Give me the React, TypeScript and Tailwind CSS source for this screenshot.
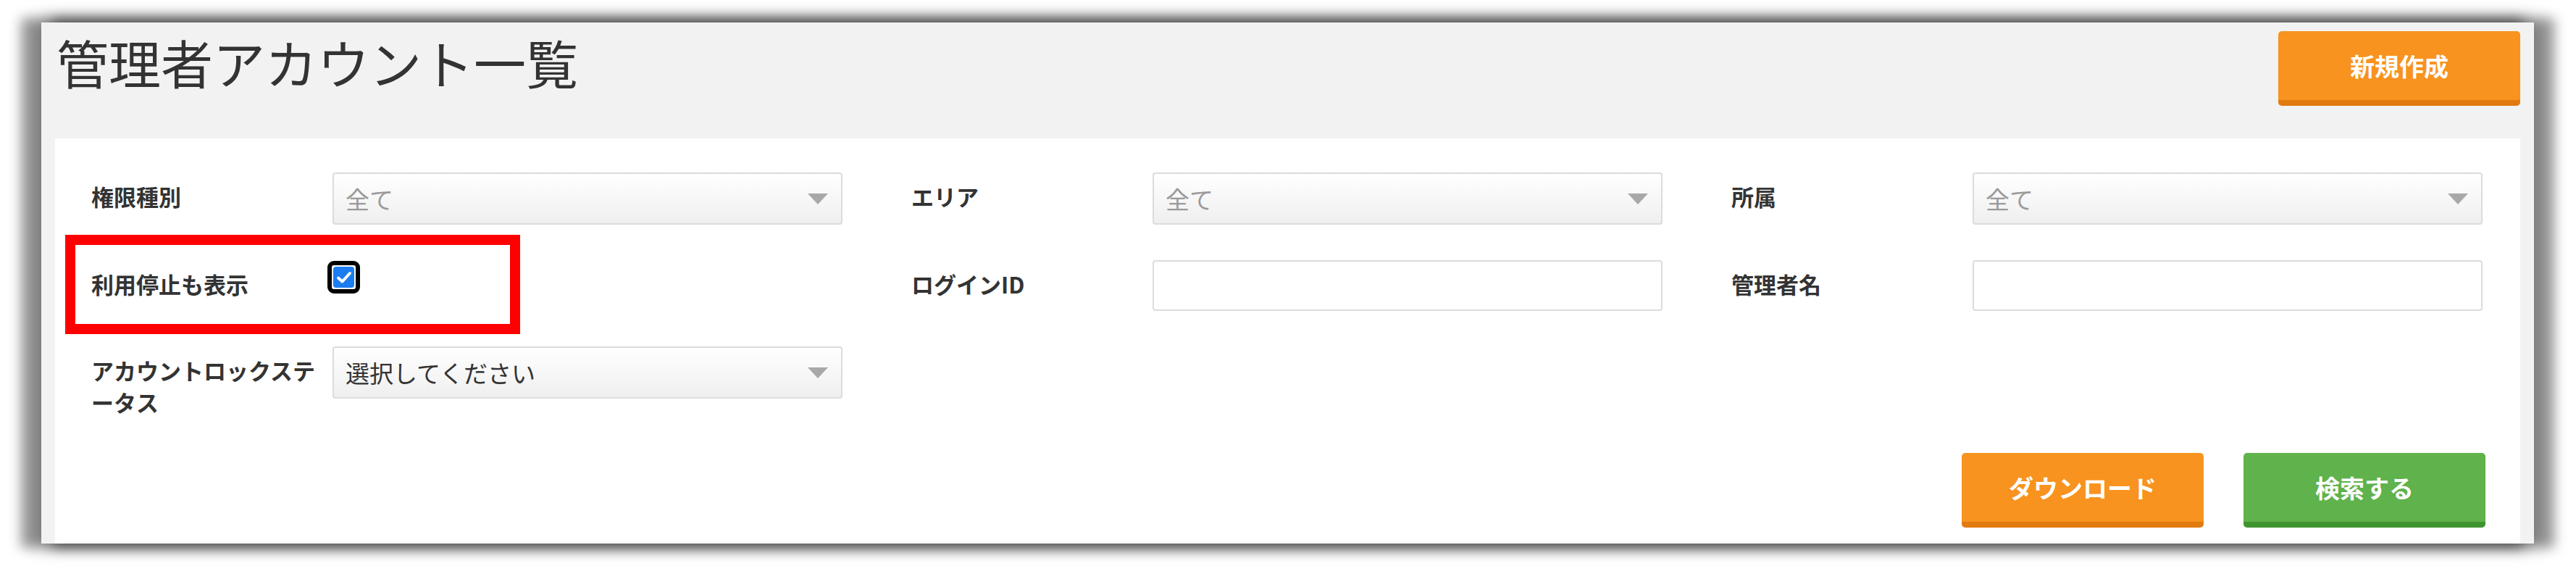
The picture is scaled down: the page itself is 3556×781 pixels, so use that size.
import React from "react";

const FONT = "font-['Noto_Sans_CJK_JP','Noto_Sans',sans-serif]";

function Arrow() {
  return (
    <svg width="28" height="15" viewBox="0 0 28 15" className="shrink-0">
      <polygon points="0,0 28,0 14,15" fill="#a8a8a8" />
    </svg>
  );
}

function SelectBox({ text, muted }: { text: string; muted?: boolean }) {
  return (
    <div className="flex h-[72px] w-[704px] items-center justify-between rounded-[4px] border-2 border-[#dcdcdc] bg-linear-to-b from-white to-[#efefef] pl-[16px] pr-[18px]">
      <span className={`text-[33px] leading-none ${muted ? "text-[#9a9a9a]" : "text-[#333333]"}`}>{text}</span>
      <Arrow />
    </div>
  );
}

function InputBox() {
  return <div className="h-[70px] w-[704px] rounded-[4px] border-2 border-[#dcdcdc] bg-white" />;
}

function Label({ children }: { children: React.ReactNode }) {
  return (
    <div className="w-[333px] shrink-0 pr-[13px] pt-[11px] text-[31px] font-bold leading-[44px] text-[#333333]">
      {children}
    </div>
  );
}

function Field({ label, children }: { label: React.ReactNode; children: React.ReactNode }) {
  return (
    <div className="flex items-start">
      <Label>{label}</Label>
      {children}
    </div>
  );
}

function CheckBox() {
  return (
    <div className="-ml-[7px] mt-[1px] flex h-[45px] w-[45px] items-center justify-center rounded-[9px] border-[6px] border-black bg-white p-[2px]">
      <div className="flex h-full w-full items-center justify-center rounded-[4px] bg-[#1c7cf2]">
        <svg width="22" height="18" viewBox="0 0 22 18">
          <path d="M3 9.5 L8.5 14.5 L19 3" fill="none" stroke="white" strokeWidth="4" strokeLinecap="round" strokeLinejoin="round" />
        </svg>
      </div>
    </div>
  );
}

function Btn({ children, color }: { children: React.ReactNode; color: "orange" | "green" }) {
  const cls =
    color === "orange"
      ? "bg-[#f8931f] border-[#e17a0f]"
      : "bg-[#5fb24c] border-[#3e952f]";
  return (
    <div
      className={`flex h-[103px] w-[334px] items-center justify-center rounded-[5px] border-b-[8px] ${cls} text-[34px] font-bold leading-none text-white`}
    >
      {children}
    </div>
  );
}

export default function App() {
  return (
    <div className={`h-[781px] w-[3556px] overflow-hidden bg-white pl-[57px] pt-[31px] ${FONT}`}>
      <div className="flex h-[719px] w-[3441px] flex-col bg-[#f2f2f2] shadow-[-22px_0_16px_6px_rgba(0,0,0,0.4),22px_0_16px_6px_rgba(0,0,0,0.4),0_0_24px_4px_rgba(0,0,0,0.25)]">
        <div className="flex h-[160px] shrink-0 items-start justify-between px-[19px]">
          <h1 className="pl-[2px] pt-[18px] text-[72px] font-normal leading-[72px] text-[#333333]">管理者アカウント一覧</h1>
          <div className="pt-[12px]">
            <Btn color="orange">新規作成</Btn>
          </div>
        </div>
        <div className="relative mx-[19px] flex flex-1 flex-col bg-white pl-[50px] pt-[47px]">
          <div className="grid grid-cols-[1037px_1037px_1037px] gap-x-[95px]">
            <div className="h-[72px]">
              <Field label="権限種別">
                <SelectBox text="全て" muted />
              </Field>
            </div>
            <div className="h-[72px]">
              <Field label="エリア">
                <SelectBox text="全て" muted />
              </Field>
            </div>
            <div className="h-[72px]">
              <Field label="所属">
                <SelectBox text="全て" muted />
              </Field>
            </div>
          </div>
          <div className="mt-[49px] grid grid-cols-[1037px_1037px_1037px] gap-x-[95px]">
            <div className="h-[70px]">
              <Field label="利用停止も表示">
                <CheckBox />
              </Field>
            </div>
            <div className="h-[70px]">
              <Field label="ログインID">
                <InputBox />
              </Field>
            </div>
            <div className="h-[70px]">
              <Field label="管理者名">
                <InputBox />
              </Field>
            </div>
          </div>
          <div className="mt-[49px] grid grid-cols-[1037px_1037px_1037px] gap-x-[95px]">
            <div className="h-[72px]">
              <Field
                label={
                  <>
                    アカウントロックステ
                    <br />
                    ータス
                  </>
                }
              >
                <SelectBox text="選択してください" />
              </Field>
            </div>
          </div>
          <div className="mt-[75px] flex justify-end gap-[55px] pr-[48px]">
            <Btn color="orange">ダウンロード</Btn>
            <Btn color="green">検索する</Btn>
          </div>
          <div className="pointer-events-none absolute left-[14px] top-[133px] h-[137px] w-[628px] border-[14px] border-[#ff0000]" />
        </div>
      </div>
    </div>
  );
}
